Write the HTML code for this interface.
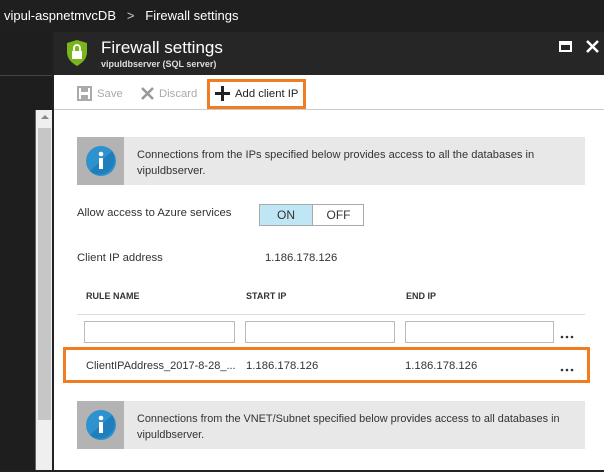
<!DOCTYPE html>
<html><head><meta charset="utf-8"><style>
*{margin:0;padding:0;box-sizing:border-box}
body{width:604px;height:472px;overflow:hidden;background:#fff;font-family:"Liberation Sans",sans-serif;position:relative;color:#333}
.a{position:absolute}
.t{font-size:11.3px;color:#333;white-space:nowrap}
.hd{font-size:9px;font-weight:bold;color:#333}
.inp{border:1px solid #bbb;height:22px;background:#fff}
</style></head><body>
<div class="a" style="left:0;top:0;width:604px;height:32px;background:#1f1f1f"></div>
<div class="a" style="left:4px;top:8px;color:#fff;font-size:13px">vipul-aspnetmvcDB&nbsp;&nbsp;&nbsp;<span style="color:#ccc">&gt;</span>&nbsp;&nbsp;&nbsp;Firewall settings</div>
<div class="a" style="left:0;top:32px;width:53px;height:440px;background:#1e1e1e"></div>
<div class="a" style="left:0;top:75px;width:53px;height:1px;background:#444"></div>
<div class="a" style="left:35px;top:110px;width:18px;height:362px;background:#efefef;border-left:1px solid #666"></div>
<div class="a" style="left:38px;top:128px;width:13px;height:292px;background:#c6c6c6"></div>
<div class="a" style="left:41px;top:115px;width:0;height:0;border-left:4px solid transparent;border-right:4px solid transparent;border-bottom:4px solid #888"></div>
<div class="a" style="left:52px;top:32px;width:2px;height:440px;background:#222"></div>
<div class="a" style="left:54px;top:32px;width:550px;height:43px;background:#262626"></div>
<svg class="a" style="left:66px;top:39px" width="22" height="28" viewBox="0 0 22 28"><path d="M11 1 L21 4 V13 C21 20 16 24 11 27 C6 24 1 20 1 13 V4 Z" fill="#7ab51d"/><rect x="6" y="12" width="10" height="8" fill="#fff"/><path d="M8 12 V9 a3 3 0 0 1 6 0 V12" fill="none" stroke="#fff" stroke-width="1.8"/></svg>
<div class="a" style="left:101px;top:38px;color:#fff;font-size:17px">Firewall settings</div>
<div class="a" style="left:101px;top:59px;color:#ddd;font-size:9px;font-weight:bold">vipuldbserver (SQL server)</div>
<div class="a" style="left:559px;top:41px;width:13px;height:11px;border:2px solid #fff;border-top-width:4px"></div>
<svg class="a" style="left:586px;top:40px" width="13" height="13"><path d="M1 1 L12 12 M12 1 L1 12" stroke="#fff" stroke-width="2.6"/></svg>
<div class="a" style="left:54px;top:109px;width:550px;height:1px;background:#ccc"></div>
<svg class="a" style="left:77px;top:86px" width="15" height="15"><rect x="1" y="1" width="13" height="13" fill="none" stroke="#aaa" stroke-width="2"/><rect x="4" y="1" width="7" height="5" fill="#aaa"/><rect x="4" y="9" width="7" height="5" fill="#aaa"/></svg>
<div class="a t" style="left:97px;top:88px;color:#aaa">Save</div>
<svg class="a" style="left:141px;top:87px" width="13" height="13"><path d="M1 1 L12 12 M12 1 L1 12" stroke="#999" stroke-width="2.6"/></svg>
<div class="a t" style="left:159px;top:88px;color:#aaa">Discard</div>
<div class="a" style="left:207px;top:79px;width:99px;height:30px;border:3px solid #f07d22"></div>
<svg class="a" style="left:215px;top:86px" width="15" height="15"><path d="M7.5 0 V15 M0 7.5 H15" stroke="#222" stroke-width="3"/></svg>
<div class="a t" style="left:235px;top:88px;color:#222">Add client IP</div>
<div class="a" style="left:77px;top:137px;width:508px;height:48px;background:#e8e8e8"></div>
<div class="a" style="left:77px;top:137px;width:47px;height:48px;background:#b3b3b3"></div>
<svg class="a" style="left:85px;top:145px" width="32" height="32"><circle cx="16" cy="16" r="15" fill="#2e92cf"/><path d="M5 26 L27 6 A15 15 0 0 1 5 26Z" fill="#1f7fbc"/><circle cx="16" cy="9" r="2.3" fill="#fff"/><rect x="14" y="13" width="4" height="11" fill="#fff"/></svg>
<div class="a t" style="left:137px;top:147px;line-height:16px;font-size:11.1px">Connections from the IPs specified below provides access to all the databases in<br>vipuldbserver.</div>
<div class="a t" style="left:77px;top:207px">Allow access to Azure services</div>
<div class="a" style="left:259px;top:204px;width:105px;height:22px;border:1px solid #aaa"></div>
<div class="a" style="left:260px;top:205px;width:53px;height:20px;background:#bfe6f5;border-right:1px solid #aaa;text-align:center;font-size:12px;line-height:20px">ON</div>
<div class="a" style="left:314px;top:205px;width:49px;height:20px;text-align:center;font-size:12px;line-height:20px">OFF</div>
<div class="a t" style="left:77px;top:252px">Client IP address</div>
<div class="a t" style="left:265px;top:252px">1.186.178.126</div>
<div class="a hd" style="left:86px;top:291px">RULE NAME</div>
<div class="a hd" style="left:246px;top:291px">START IP</div>
<div class="a hd" style="left:406px;top:291px">END IP</div>
<div class="a" style="left:77px;top:314px;width:508px;height:1px;background:#ddd"></div>
<div class="a inp" style="left:84px;top:321px;width:151px"></div>
<div class="a inp" style="left:245px;top:321px;width:150px"></div>
<div class="a inp" style="left:405px;top:321px;width:149px"></div>
<svg class="a" style="left:560px;top:335px" width="14" height="4"><circle cx="2" cy="2" r="1.3" fill="#333"/><circle cx="7" cy="2" r="1.3" fill="#333"/><circle cx="12" cy="2" r="1.3" fill="#333"/></svg>
<div class="a" style="left:63px;top:347px;width:527px;height:36px;border:3px solid #f07d22"></div>
<div class="a t" style="left:86px;top:360px;font-size:11px">ClientIPAddress_2017-8-28_...</div>
<div class="a t" style="left:246px;top:360px">1.186.178.126</div>
<div class="a t" style="left:405px;top:360px">1.186.178.126</div>
<svg class="a" style="left:560px;top:368px" width="14" height="4"><circle cx="2" cy="2" r="1.3" fill="#333"/><circle cx="7" cy="2" r="1.3" fill="#333"/><circle cx="12" cy="2" r="1.3" fill="#333"/></svg>
<div class="a" style="left:77px;top:401px;width:508px;height:48px;background:#e8e8e8"></div>
<div class="a" style="left:77px;top:401px;width:47px;height:48px;background:#b3b3b3"></div>
<svg class="a" style="left:85px;top:409px" width="32" height="32"><circle cx="16" cy="16" r="15" fill="#2e92cf"/><path d="M5 26 L27 6 A15 15 0 0 1 5 26Z" fill="#1f7fbc"/><circle cx="16" cy="9" r="2.3" fill="#fff"/><rect x="14" y="13" width="4" height="11" fill="#fff"/></svg>
<div class="a t" style="left:137px;top:411px;line-height:16px;font-size:10.9px">Connections from the VNET/Subnet specified below provides access to all databases in<br>vipuldbserver.</div>
<div class="a" style="left:0;top:470px;width:604px;height:2px;background:#222"></div>
</body></html>
